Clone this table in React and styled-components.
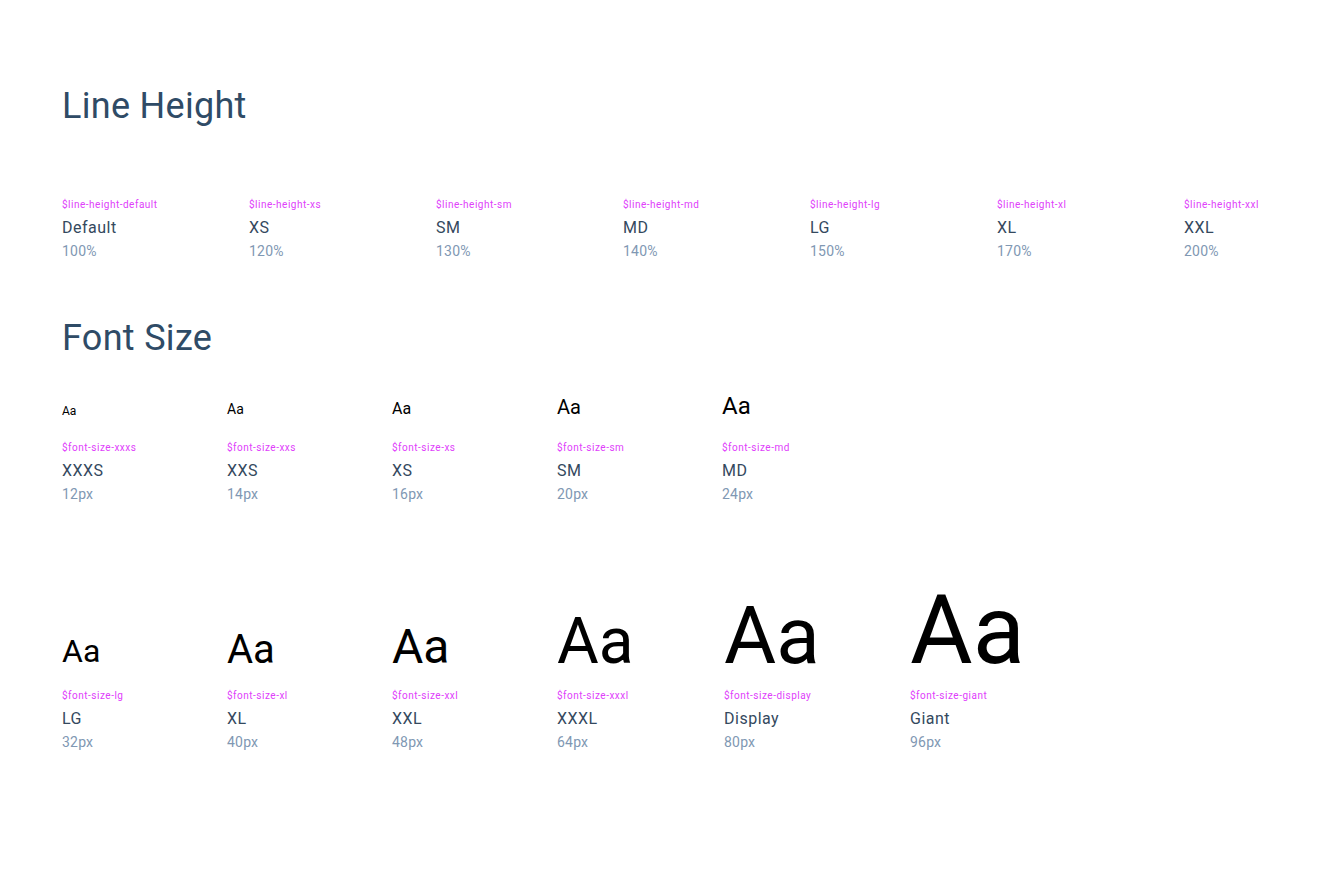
import React from "react";
import styled, { createGlobalStyle } from "styled-components";

const GlobalStyle = createGlobalStyle`
  html, body { margin: 0; padding: 0; background: #ffffff; }
  body { font-family: Roboto, "Noto Sans", "Liberation Sans", sans-serif; -webkit-font-smoothing: antialiased; }
`;

const Page = styled.main`
  padding: 85px 0 0 62px;
  width: 1320px;
  box-sizing: border-box;
`;

const Heading = styled.h2`
  margin: 0;
  font-size: 36px;
  line-height: 1.2;
  font-weight: 400;
  letter-spacing: 0.3px;
  color: #2f4b66;
`;

const LineHeightGrid = styled.div`
  display: grid;
  grid-template-columns: repeat(7, 187px);
  margin-top: 70px;
  margin-bottom: 56px;
`;

const SizeRow = styled.div`
  display: flex;
  align-items: flex-end;
  margin-top: ${(p) => p.$top}px;
`;

const Item = styled.div`
  display: flex;
  flex-direction: column;
  width: ${(p) => (p.$w ? `${p.$w}px` : "auto")};
  flex: none;
`;

const Sample = styled.span`
  display: block;
  font-size: ${(p) => p.$size}px;
  line-height: 0.683;
  color: #000000;
  margin-bottom: 26px;
  white-space: nowrap;
`;

const Token = styled.span`
  display: block;
  font-size: 10px;
  line-height: 14px;
  letter-spacing: 0.5px;
  color: #e040fb;
  margin-bottom: 4px;
  white-space: nowrap;
`;

const Name = styled.span`
  display: block;
  font-size: 16px;
  line-height: 24px;
  color: #34495e;
  letter-spacing: 0.5px;
`;

const Value = styled.span`
  display: block;
  margin-top: 1px;
  font-size: 14px;
  line-height: 20px;
  color: #7f98b3;
  letter-spacing: 0.2px;
`;

const lineHeights = [
  ["$line-height-default", "Default", "100%"],
  ["$line-height-xs", "XS", "120%"],
  ["$line-height-sm", "SM", "130%"],
  ["$line-height-md", "MD", "140%"],
  ["$line-height-lg", "LG", "150%"],
  ["$line-height-xl", "XL", "170%"],
  ["$line-height-xxl", "XXL", "200%"],
];

const sizeRow1 = [
  ["$font-size-xxxs", "XXXS", 12, 165],
  ["$font-size-xxs", "XXS", 14, 165],
  ["$font-size-xs", "XS", 16, 165],
  ["$font-size-sm", "SM", 20, 165],
  ["$font-size-md", "MD", 24, 165],
];

const sizeRow2 = [
  ["$font-size-lg", "LG", 32, 165],
  ["$font-size-xl", "XL", 40, 165],
  ["$font-size-xxl", "XXL", 48, 165],
  ["$font-size-xxxl", "XXXL", 64, 167],
  ["$font-size-display", "Display", 80, 186],
  ["$font-size-giant", "Giant", 96, 0],
];

function SizeItem({ token, name, size, width }) {
  return (
    <Item $w={width}>
      <Sample $size={size}>Aa</Sample>
      <Token>{token}</Token>
      <Name>{name}</Name>
      <Value>{size}px</Value>
    </Item>
  );
}

export default function App() {
  return (
    <>
      <GlobalStyle />
      <Page>
        <Heading>Line Height</Heading>
        <LineHeightGrid>
          {lineHeights.map(([t, n, v]) => (
            <Item key={t}>
              <Token>{t}</Token>
              <Name>{n}</Name>
              <Value>{v}</Value>
            </Item>
          ))}
        </LineHeightGrid>
        <Heading>Font Size</Heading>
        <SizeRow $top={38}>
          {sizeRow1.map(([t, n, s, w]) => (
            <SizeItem key={t} token={t} name={n} size={s} width={w} />
          ))}
        </SizeRow>
        <SizeRow $top={94}>
          {sizeRow2.map(([t, n, s, w]) => (
            <SizeItem key={t} token={t} name={n} size={s} width={w} />
          ))}
        </SizeRow>
      </Page>
    </>
  );
}
